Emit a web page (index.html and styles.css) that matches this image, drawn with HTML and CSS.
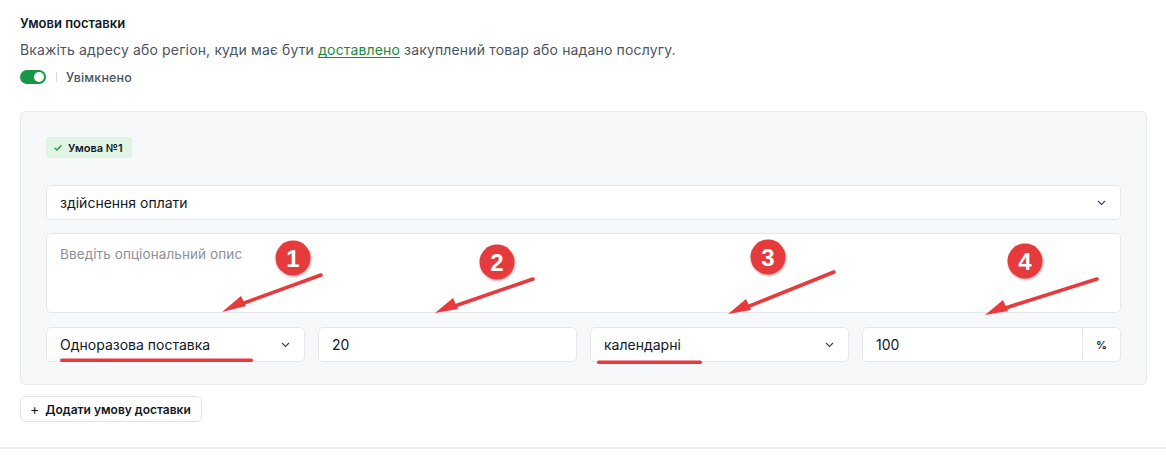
FILE: index.html
```html
<!DOCTYPE html>
<html lang="uk">
<head>
<meta charset="utf-8">
<link rel="stylesheet" href="styles.css">
</head>
<body>
<div class="page">
  <section class="section">
    <h2 class="title">Умови поставки</h2>
    <p class="desc">Вкажіть адресу або регіон, куди має бути <a class="link" href="#">доставлено</a> закуплений товар або надано послугу.</p>
    <div class="toggle-row">
      <span class="toggle"><span class="knob"></span></span>
      <span class="sep"></span>
      <span class="toggle-label">Увімкнено</span>
    </div>

    <div class="panel">
      <div class="badge">
        <svg class="check" width="8" height="8" viewBox="0 0 8 8"><path d="M1 4.2 L3 6 L7 1.8" fill="none" stroke="#2f9a4c" stroke-width="1.4" stroke-linecap="round" stroke-linejoin="round"/></svg>
        <span>Умова №1</span>
      </div>

      <div class="field select full">
        <span class="value">здійснення оплати</span>
        <svg class="chev" width="9" height="6" viewBox="0 0 9 6"><path d="M1 1 L4.5 4.5 L8 1" fill="none" stroke="#374151" stroke-width="1.1"/></svg>
      </div>

      <div class="field textarea">
        <span class="placeholder">Введіть опціональний опис</span>
      </div>

      <div class="row">
        <div class="field select">
          <span class="value">Одноразова поставка</span>
          <svg class="chev" width="9" height="6" viewBox="0 0 9 6"><path d="M1 1 L4.5 4.5 L8 1" fill="none" stroke="#374151" stroke-width="1.1"/></svg>
        </div>
        <div class="field">
          <span class="value">20</span>
        </div>
        <div class="field select">
          <span class="value">календарні</span>
          <svg class="chev" width="9" height="6" viewBox="0 0 9 6"><path d="M1 1 L4.5 4.5 L8 1" fill="none" stroke="#374151" stroke-width="1.1"/></svg>
        </div>
        <div class="field addon-field">
          <span class="value">100</span>
          <span class="addon">%</span>
        </div>
      </div>
    </div>

    <button class="add-btn" type="button"><span class="plus">+</span>Додати умову доставки</button>
  </section>
  <div class="divider"></div>

  <svg class="annot" width="1166" height="455" viewBox="0 0 1166 455">
    <defs>
      <filter id="sh" x="-30%" y="-30%" width="160%" height="160%">
        <feDropShadow dx="0.6" dy="1.2" stdDeviation="0.9" flood-color="#000" flood-opacity="0.35"/>
      </filter>
    </defs>
    <g fill="#e8393c" stroke="none">
      <rect x="60" y="358.5" width="193" height="3.5" rx="1.75"/>
      <rect x="597" y="360.5" width="105" height="3.5" rx="1.75"/>
    </g>
    <g stroke="#e8393c" stroke-width="3.6" stroke-linecap="round" fill="none">
      <line x1="321" y1="275" x2="236" y2="306"/>
      <line x1="533" y1="279" x2="449" y2="308"/>
      <line x1="834" y1="272" x2="742" y2="309"/>
      <line x1="1097" y1="279" x2="999" y2="310"/>
    </g>
    <g fill="#e8393c">
      <polygon points="222,312 241,296 246,306"/>
      <polygon points="435,313 453,298 458,309"/>
      <polygon points="728,314 746,299 751,310"/>
      <polygon points="985,315 1003,300 1008,311"/>
    </g>
    <g filter="url(#sh)" fill="#e53a3d">
      <circle cx="293" cy="258" r="17.5"/>
      <circle cx="497" cy="262" r="17.5"/>
      <circle cx="768" cy="257" r="17.5"/>
      <circle cx="1025" cy="261" r="17.5"/>
    </g>
    <g class="annot-num" fill="#ffffff" text-anchor="middle">
      <text x="293" y="266.5">1</text>
      <text x="497" y="270.5">2</text>
      <text x="768" y="265.5">3</text>
      <text x="1025" y="269.5">4</text>
    </g>
  </svg>
</div>
</body>
</html>
```

FILE: styles.css
```css
* { box-sizing: border-box; }
html, body { margin: 0; padding: 0; background: #ffffff; }
body {
  font-family: Inter, "Noto Sans", "Liberation Sans", sans-serif;
  color: #111827;
  width: 1166px;
  height: 455px;
  overflow: hidden;
}
.page { position: relative; width: 1166px; height: 455px; }
.section { padding: 14px 19px 0 20px; }
.title {
  margin: 0;
  font-size: 13px;
  font-weight: 600;
  line-height: 18px;
  color: #111827;
}
.desc {
  margin: 9px 0 0;
  font-size: 14px;
  line-height: 18px;
  letter-spacing: 0.15px;
  color: #4b5563;
}
.link { color: #198a3e; text-decoration: underline; text-underline-offset: 2px; }
.toggle-row {
  display: flex;
  align-items: center;
  margin-top: 8px;
  height: 20px;
}
.toggle {
  width: 26px; height: 14px;
  border-radius: 7px;
  background: #1a9648;
  position: relative;
  display: inline-block;
}
.knob {
  position: absolute; right: 2px; top: 2px;
  width: 10px; height: 10px; border-radius: 50%;
  background: #fff;
}
.sep { width: 1px; height: 10px; background: #d8dbe0; margin: 0 9px 0 10px; }
.toggle-label { font-size: 12.5px; color: #4b5563; font-weight: 500; letter-spacing: 0.15px; }

.panel {
  margin-top: 24px;
  background: #f7f8fa;
  border: 1px solid #e8e9ed;
  border-radius: 6px;
  padding: 25px 25px 22px 25px;
  height: 274px;
  display: flex;
  flex-direction: column;
  align-items: stretch;
}
.badge {
  align-self: flex-start;
  display: flex;
  align-items: center;
  gap: 6px;
  height: 21px;
  padding: 0 9px 0 8px;
  background: #dff4e2;
  border-radius: 3px;
  font-size: 11px;
  font-weight: 600;
  color: #111827;
}
.check { display: block; }
.field {
  background: #fff;
  border: 1px solid #e5e7eb;
  border-radius: 5px;
  height: 35px;
  display: flex;
  align-items: center;
  padding: 0 13px;
  font-size: 14px;
  color: #111827;
}
.select { justify-content: space-between; }
.chev { margin-right: 1px; }
.full { margin-top: 27px; }
.textarea {
  margin-top: 13px;
  height: 80px;
  align-items: flex-start;
  padding-top: 12px;
}
.placeholder { color: #8b919b; font-size: 13.5px; letter-spacing: 0.1px; }
.row {
  margin-top: 14px;
  display: grid;
  grid-template-columns: repeat(4, 1fr);
  gap: 13px;
}
.addon-field { padding-right: 0; }
.addon-field .value { flex: 1; }
.addon {
  width: 38px; height: 100%;
  border-left: 1px solid #e5e7eb;
  display: flex; align-items: center; justify-content: center;
  font-size: 11px; font-weight: 600;
}
.add-btn {
  margin-top: 11px;
  height: 26px;
  padding: 0 10px 0 9px;
  background: #fff;
  border: 1px solid #e2e4e8;
  border-radius: 5px;
  font-family: inherit;
  font-size: 12px;
  font-weight: 600;
  color: #111827;
  display: inline-flex;
  align-items: center;
}
.plus { font-weight: 400; font-size: 14px; margin-right: 6px; line-height: 1; }
.divider {
  position: absolute; left: 0; right: 0; top: 447px;
  height: 2px; background: #eceef2;
}
.annot { position: absolute; left: 0; top: 0; pointer-events: none; }
.annot-num text {
  font-family: "Liberation Sans", Arial, sans-serif;
  font-weight: 700;
  font-size: 24px;
}
```
